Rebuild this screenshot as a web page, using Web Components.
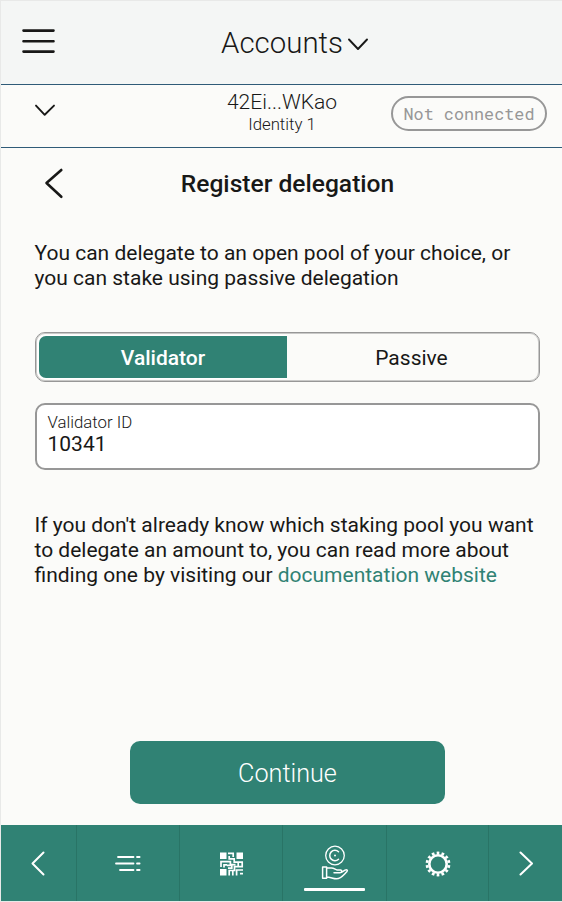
<!DOCTYPE html>
<html lang="en"><head><meta charset="utf-8"><title>Accounts</title>
<style>
html,body{margin:0;height:100%;background:#fbfbf9}
body{font-family:Roboto,"Liberation Sans",sans-serif;color:#181817}
</style></head><body>
<wallet-app>
  <app-header slot="header">Accounts</app-header>
  <account-bar slot="header" address="42Ei...WKao" identity="Identity 1"><status-pill>Not connected</status-pill></account-bar>
  <page-title>Register delegation</page-title>
  <text-block>You can delegate to an open pool of your choice, or<br>you can stake using passive delegation</text-block>
  <toggle-group><span slot="on">Validator</span><span slot="off">Passive</span></toggle-group>
  <text-field label="Validator ID">10341</text-field>
  <text-block class="hint">If you don't already know which staking pool you want<br>to delegate an amount to, you can read more about<br>finding one by visiting our <a>documentation website</a></text-block>
  <action-button>Continue</action-button>
  <nav-bar slot="footer"></nav-bar>
</wallet-app>
<script>
const define=(name,html)=>customElements.define(name,class extends HTMLElement{
  constructor(){super();const t=document.createElement('template');
    t.innerHTML=html.replace(/\{\{(\w+)\}\}/g,(_,k)=>this.getAttribute(k)||'');
    this.attachShadow({mode:'open'}).append(t.content.cloneNode(true));}
});
define('wallet-app',`<style>
:host{display:flex;flex-direction:column;box-sizing:border-box;height:902px;width:562px;border-left:1px solid #e8e9e8;border-top:1px solid #e8e9e8;border-bottom:1px solid #e8e9e8;background:#fbfbf9;overflow:hidden}
main{flex:1;display:flex;flex-direction:column;padding:0 22px 21px 34px}
::slotted(.hint){margin-top:43px}
::slotted(action-button){margin-top:auto}
</style><slot name="header"></slot><main><slot></slot></main><slot name="footer"></slot>`);
define('app-header',`<style>
:host{display:grid;grid-template-columns:76px 1fr 50px;align-items:center;box-sizing:border-box;height:84px;background:#f4f6f5;border-bottom:1px solid #2f5b78}
.menu{margin:0 0 4px 21px}
h1{margin:0;display:flex;align-items:center;justify-content:center;gap:5px;font-weight:300;font-size:29.4px;line-height:34px}
h1 svg{margin-top:2px}
</style><svg class="menu" width="34" height="26" fill="none" stroke="#181817" stroke-width="2.6" stroke-linecap="round"><path d="M1.5 2.6H31.5M1.5 13.2H31.5M1.5 23.6H31.5"/></svg>
<h1><slot></slot><svg width="20" height="12" fill="none" stroke="#181817" stroke-width="1.9" stroke-linecap="round" stroke-linejoin="round"><path d="M1 1.5L10 11L19 1.5"/></svg></h1>`);
define('account-bar',`<style>
:host{display:grid;grid-template-columns:171px 1fr 171px;box-sizing:border-box;height:63px;border-bottom:1px solid #2f5b78;font-weight:300;text-align:center}
svg{margin:19px 0 0 33px}
.a{font-size:21px;line-height:25px;padding-top:5px}
.i{font-size:16.8px;line-height:18px}
.r{display:flex;justify-content:flex-end;padding:11px 15px 0 0}
.c{padding-left:1px}
</style><svg width="22" height="14" fill="none" stroke="#181817" stroke-width="1.9" stroke-linecap="round" stroke-linejoin="round"><path d="M2 1.6L10.7 10.8L20 1.6"/></svg>
<div class="c"><div class="a">{{address}}</div><div class="i">{{identity}}</div></div><div class="r"><slot></slot></div>`);
define('status-pill',`<style>
:host{display:flex;box-sizing:border-box;width:156px;height:35px;border:2px solid #979797;border-radius:18px;align-items:center;justify-content:center;font:400 16.8px/20px "Roboto Mono","Liberation Mono",monospace;color:#979797}
</style><slot></slot>`);
define('page-title',`<style>
:host{display:grid;grid-template-columns:40px 1fr 40px;align-items:start;height:93px;padding-top:20px;box-sizing:border-box}
svg{margin-left:9px}
h2{margin:0;text-align:center;font-size:24.6px;line-height:32px;font-weight:500}
</style><svg width="22" height="32" fill="none" stroke="#181817" stroke-width="2.6" stroke-linecap="round" stroke-linejoin="round"><path d="M17.3 2L2.5 15L17.3 28.8"/></svg><h2><slot></slot></h2>`);
define('text-block',`<style>
:host{display:block;font-size:21px;line-height:25px;white-space:nowrap;margin-left:-.5px}
::slotted(a){color:#308274}
</style><slot></slot>`);
define('toggle-group',`<style>
:host{display:grid;grid-template-columns:248px 1fr;box-sizing:border-box;height:50px;margin-top:41px;border:1px solid #979797;box-shadow:inset 0 0 0 1px #c9c9c8;border-radius:10px;padding:3px;font-size:21px}
div{display:flex;align-items:center;justify-content:center;padding-top:1px}
.on{background:#308274;color:#fff;font-weight:500;border-radius:7px 0 0 7px;box-shadow:-1px 0 0 1px #fff}
</style><div class="on"><slot name="on"></slot></div><div><slot name="off"></slot></div>`);
define('text-field',`<style>
:host{display:flex;flex-direction:column;box-sizing:border-box;height:67px;margin-top:21px;border:2px solid #979797;border-radius:10px;background:#fff;padding:8px 10.5px;font-size:21px;line-height:24px}
label{font-size:16.8px;line-height:19px;font-weight:300}
</style><label>{{label}}</label><span><slot></slot></span>`);
define('action-button',`<style>
:host{display:flex;align-self:center;align-items:center;justify-content:center;box-sizing:border-box;width:315px;height:63px;padding-top:2px;border-radius:10px;background:#308274;color:#fff;font-size:25.2px;font-weight:300}
</style><slot></slot>`);
define('nav-bar',`<style>
:host{display:grid;grid-template-columns:76px 103px 103px 104px 102px 1fr;height:76px;background:#308274}
div{border-right:1px solid #297466;display:flex;justify-content:center;align-items:center;position:relative}
div:last-child{border:0}
svg{display:block;fill:none;stroke:#fff;stroke-linecap:round;stroke-linejoin:round}
.back{margin-right:1px}
.qr{stroke-linecap:butt;stroke-linejoin:miter;margin:1px 0 0 2px}
.gear{margin:1px 0 0 1px;stroke-linecap:butt}
i{position:absolute;left:21px;top:63px;width:61px;height:3px;border-radius:1px;background:#fff}
</style>
<div><svg class="back" width="14" height="26" stroke-width="2"><path d="M12.5 2.5L1.5 13.5L12.5 24.5"/></svg></div>
<div><svg width="28" height="20" stroke-width="1.8"><path d="M4 4H19.5M2 10.5H19.5M6 17H19.5M23 4H25.6M23 10.5H25.6M23 17H25.6"/></svg></div>
<div><svg class="qr" width="24" height="24" stroke-width="1.7"><path fill="#fff" stroke="none" d="M0 0.5H6.5V7H0ZM16.5 0.5H23V7H16.5ZM0 17H6.5V23.5H0Z"/><path d="M8 1.4H13.2V5M9.2 4V6.8H14.2V10.2H23M1 15V9.6H10.4V13.3H7M4 15.5V12.8H7M8 16.2H11.8V12.6H15.5M22.2 9.5V14.6H14.5V18.5H9.2V23.5M12.8 18.5V23.5M18.2 9.5V14.6M16.6 23.5V18H23M20 21.6H23"/></svg></div>
<div><svg width="28" height="36" viewBox="321 845 28 36" stroke-width="1.3"><circle cx="335" cy="855.5" r="9.3"/><path d="M338.5 851.7A5.2 5.2 0 1 0 338.5 859.3" stroke-width="1.5"/><circle cx="335" cy="855.5" r="1" fill="#fff" stroke="none"/><path d="M322.6 867H326.6V878.3H322.6ZM326.6 868H331.5C334 868 335.5 869.8 337 870H340.5C342.6 870.4 342 872.7 340 872.7H334M341.8 872.2L345 870.2C347 869 348 870.6 346.8 871.8C343.5 875 341 878.8 336.5 878.8C333 878.8 330.5 877 326.6 877" stroke-width="1.5"/></svg><i></i></div>
<div><svg class="gear" width="26" height="26"><circle cx="13" cy="13" r="8.7" stroke-width="2.6"/><circle cx="13" cy="13" r="11" stroke-width="2.8" pathLength="140" stroke-dasharray="5.5 4.5" stroke-dashoffset="2.75" transform="rotate(-90 13 13)"/></svg></div>
<div><svg width="14" height="26" stroke-width="2"><path d="M1.5 2.5L13 13.5L1.5 24.5"/></svg></div>`);
</script></body></html>
